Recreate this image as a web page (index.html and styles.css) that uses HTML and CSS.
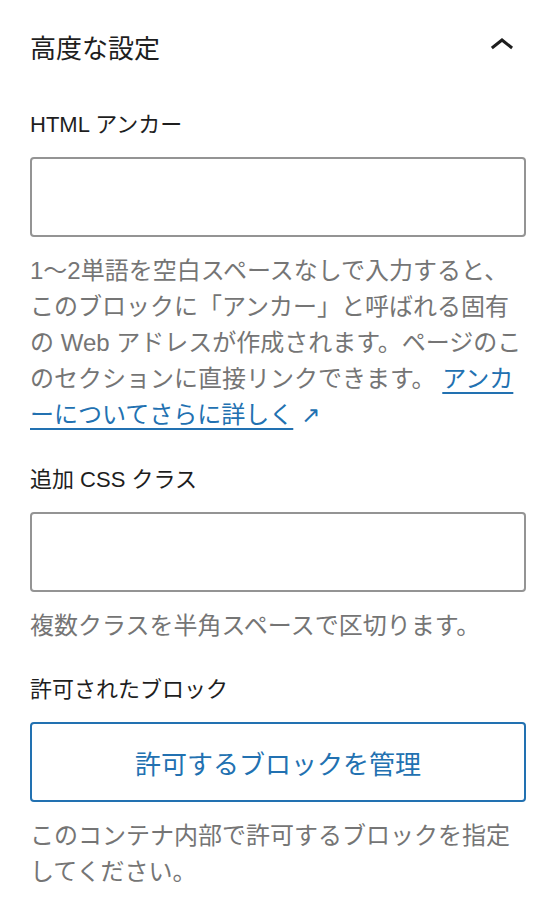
FILE: index.html
```html
<!DOCTYPE html>
<html lang="ja">
<head>
<meta charset="utf-8">
<title>高度な設定</title>
<link rel="stylesheet" href="styles.css">
</head>
<body>
<section class="panel">
  <div class="panel-header">
    <h2 class="panel-title">高度な設定</h2>
    <svg class="chevron" width="48" height="48" viewBox="0 0 24 24" aria-hidden="true"><path d="M6.5 12.4L12 8l5.5 4.4-.9 1.2L12 10l-4.6 3.6-1-1.2z"/></svg>
  </div>
  <div class="panel-body">
    <div class="field">
      <label class="field-label" for="anchor">HTML アンカー</label>
      <input class="text-input" id="anchor" type="text">
      <p class="help">1〜2単語を空白スペースなしで入力すると、このブロックに「アンカー」と呼ばれる固有の Web アドレスが作成されます。ページのこのセクションに直接リンクできます。 <a class="link" href="#">アンカーについてさらに詳しく</a><span class="ext-icon">↗</span></p>
    </div>
    <div class="field">
      <label class="field-label" for="css">追加 CSS クラス</label>
      <input class="text-input" id="css" type="text">
      <p class="help">複数クラスを半角スペースで区切ります。</p>
    </div>
    <div class="field field-allowed">
      <div class="field-label">許可されたブロック</div>
      <button class="secondary-button" type="button">許可するブロックを管理</button>
      <p class="help">このコンテナ内部で許可するブロックを指定してください。</p>
    </div>
  </div>
</section>
</body>
</html>
```
FILE: styles.css
```css
html, body {
  margin: 0;
  padding: 0;
  background: #ffffff;
}

body {
  font-family: "Liberation Sans", "Noto Sans CJK JP", sans-serif;
  color: #1e1e1e;
}

.panel {
  padding: 0 26px 0 30px;
}

.panel-header {
  display: flex;
  align-items: center;
  justify-content: space-between;
  height: 96px;
}

.panel-title {
  margin: 0;
  padding-top: 2px;
  font-size: 26px;
  line-height: 32px;
  font-weight: 400;
  color: #1e1e1e;
}

.chevron {
  display: block;
  fill: #1e1e1e;
  margin-top: -4px;
}

.panel-body {
  padding-top: 13px;
}

.field {
  display: flex;
  flex-direction: column;
}

.field + .field {
  margin-top: 31px;
}

.field.field-allowed {
  margin-top: 30px;
}

.field-label {
  font-size: 22px;
  line-height: 32px;
  font-weight: 400;
  color: #1e1e1e;
  margin-bottom: 16px;
}

.text-input {
  box-sizing: border-box;
  height: 80px;
  width: 100%;
  margin: 0;
  border: 2px solid #949494;
  border-radius: 4px;
  background: #ffffff;
  font: inherit;
}

.help {
  margin: 16px 0 0;
  font-size: 24px;
  line-height: 36px;
  color: #757575;
}

.link {
  color: #2271b1;
  text-decoration: underline;
  text-decoration-thickness: 2px;
  text-underline-offset: 5px;
}

.ext-icon {
  color: #2271b1;
  font-family: "DejaVu Sans", sans-serif;
  font-size: 23px;
  line-height: 1;
  margin-left: 8px;
}

.secondary-button {
  box-sizing: border-box;
  height: 80px;
  width: 100%;
  margin: 0;
  border: 2px solid #2271b1;
  border-radius: 4px;
  background: #ffffff;
  color: #2271b1;
  font-family: "Liberation Sans", "Noto Sans CJK JP", sans-serif;
  font-size: 26px;
  cursor: pointer;
}
```
